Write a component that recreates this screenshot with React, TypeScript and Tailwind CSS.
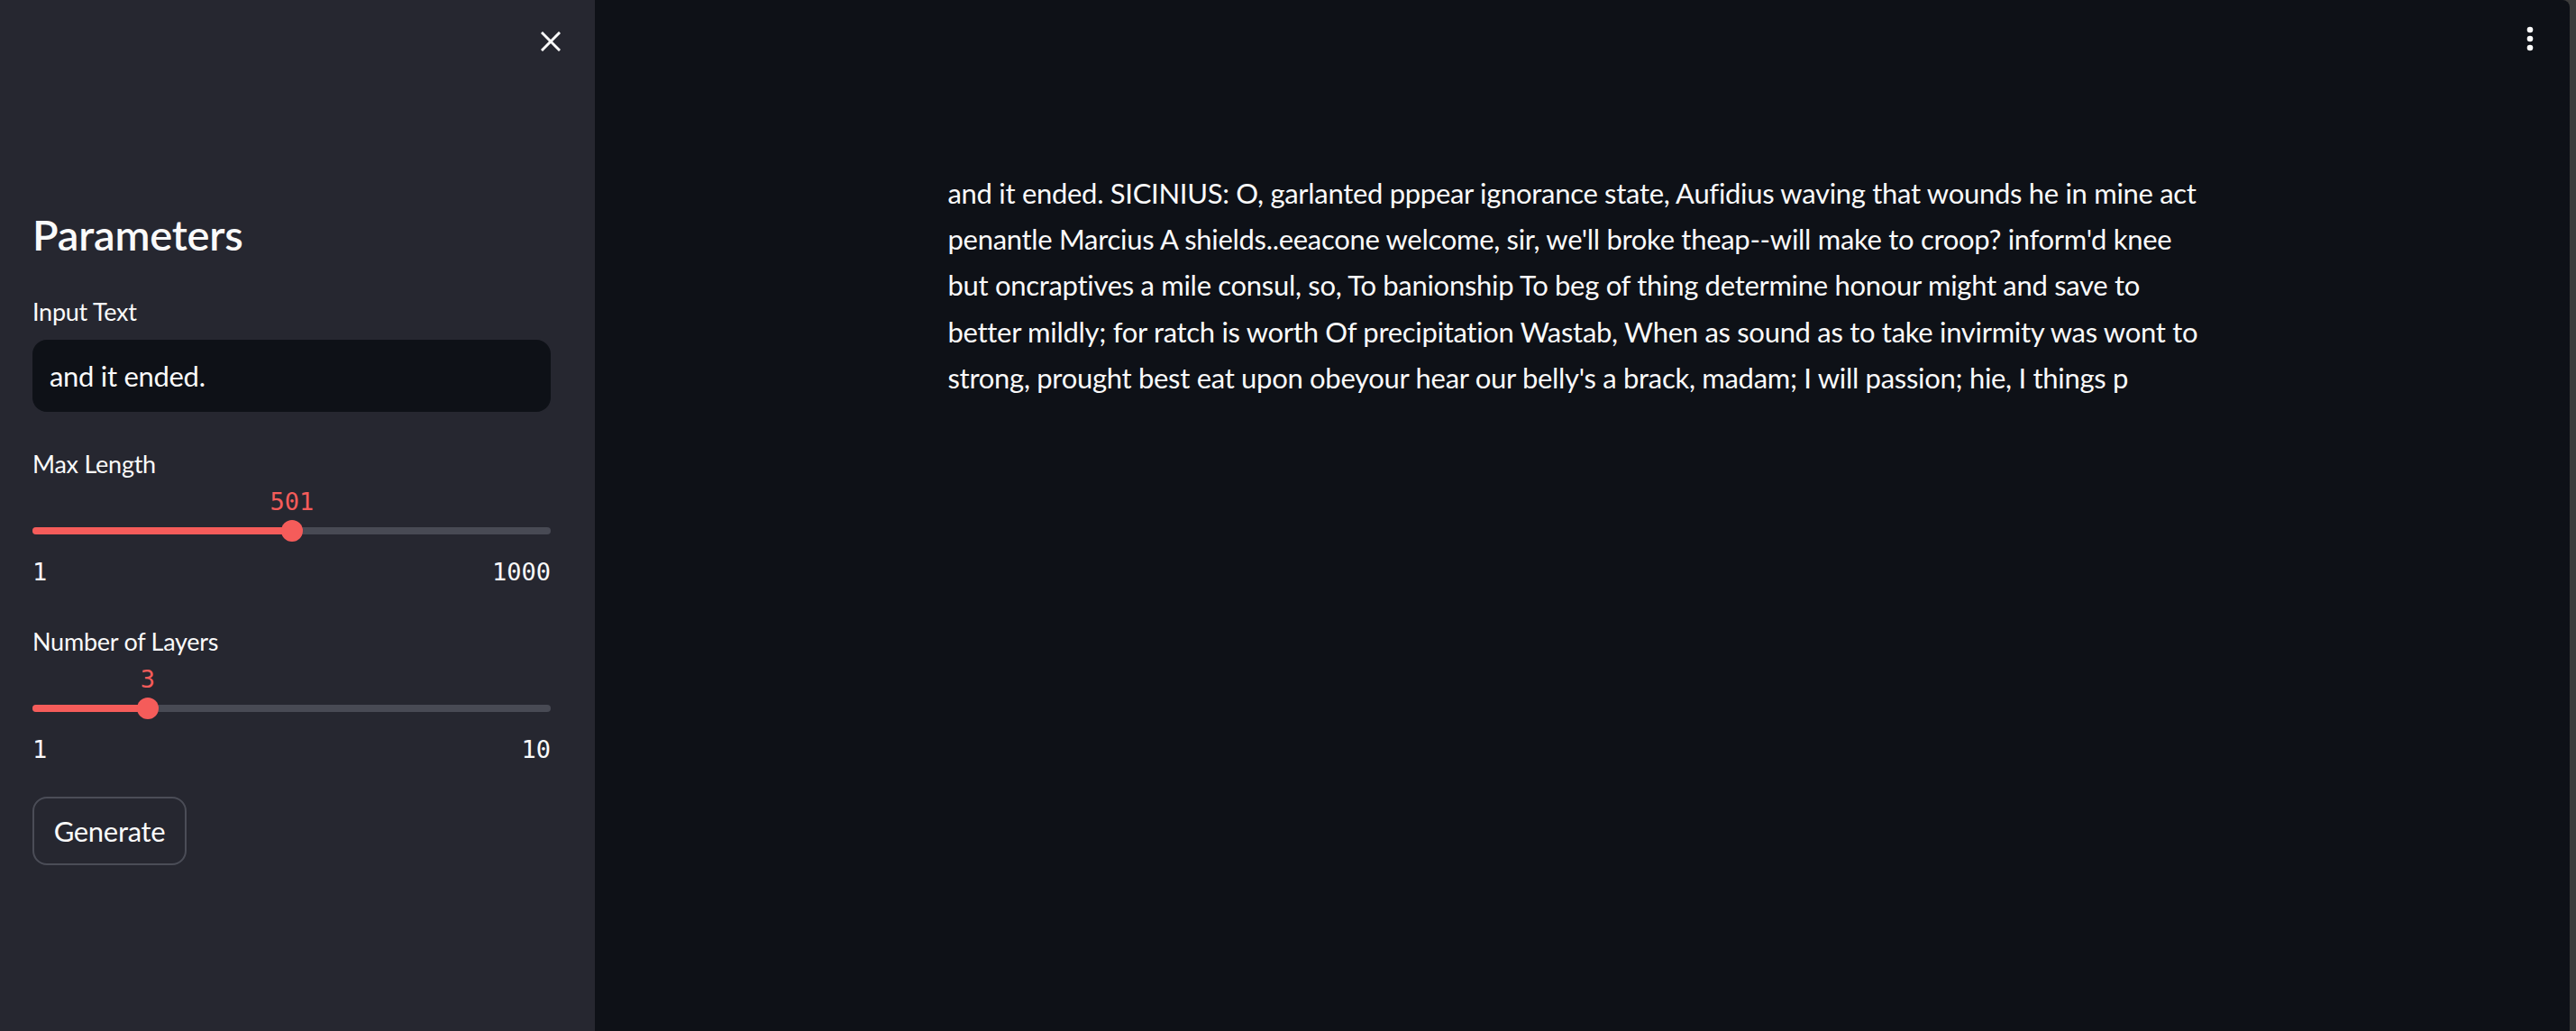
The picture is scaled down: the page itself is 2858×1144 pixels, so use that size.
const sans = { fontFamily: '"Lato", "Noto Sans", sans-serif' };
const mono = { fontFamily: '"DejaVu Sans Mono", "Liberation Mono", monospace' };

const output =
  "and it ended. SICINIUS: O, garlanted pppear ignorance state, Aufidius waving that wounds he in mine act penantle Marcius A shields..eeacone welcome, sir, we'll broke theap--will make to croop? inform'd knee but oncraptives a mile consul, so, To banionship To beg of thing determine honour might and save to better mildly; for ratch is worth Of precipitation Wastab, When as sound as to take invirmity was wont to strong, prought best eat upon obeyour hear our belly's a brack, madam; I will passion; hie, I things p";

function Slider({ label, value, min, max }: { label: string; value: number; min: number; max: number }) {
  const pct = ((value - min) / (max - min)) * 100;
  return (
    <div>
      <div className="text-[27px] leading-[36px] tracking-[-0.25px]">{label}</div>
      <div className="relative mt-[9px] h-[63px]">
        <div
          className="absolute top-0 -translate-x-1/2 text-[27px] leading-[30px] text-[#f55c5a]"
          style={{ ...mono, left: `${pct}%` }}
        >
          {value}
        </div>
        <div className="absolute left-0 right-0 top-[43px] h-[8px] rounded-full bg-[#484a54]">
          <div className="h-full rounded-full bg-[#f55c5a]" style={{ width: `${pct}%` }} />
        </div>
        <div
          className="absolute top-[35px] h-[24px] w-[24px] -translate-x-1/2 rounded-full bg-[#f55c5a]"
          style={{ left: `${pct}%` }}
        />
      </div>
      <div className="mt-[15px] flex justify-between text-[27px] leading-[30px]" style={mono}>
        <span>{min}</span>
        <span>{max}</span>
      </div>
    </div>
  );
}

export default function App() {
  return (
    <div className="flex h-[1144px] w-full overflow-hidden bg-[#3c3c3c] text-[#fafafa]" style={sans}>
      <aside className="w-[660px] shrink-0 bg-[#262730] pl-[36px] pr-[49px]">
        <div className="flex h-[231px] justify-end pt-[35px]">
          <button type="button" className="-mr-[11px] h-[22px] w-[22px]">
            <svg viewBox="0 0 22 22" className="h-[22px] w-[22px]" stroke="#fafafa" strokeWidth="3" strokeLinecap="square">
              <line x1="2" y1="2" x2="20" y2="20" />
              <line x1="20" y1="2" x2="2" y2="20" />
            </svg>
          </button>
        </div>
        <h2 className="text-[47px] font-semibold leading-[58px] tracking-[-0.2px]">Parameters</h2>
        <div className="mt-[39px] text-[27px] leading-[36px] tracking-[-0.25px]">Input Text</div>
        <div className="mt-[13px] flex h-[80px] items-center rounded-[16px] bg-[#0e1117] px-[19px] text-[31px] tracking-[-0.3px]">
          and it ended.
        </div>
        <div className="mt-[40px]">
          <Slider label="Max Length" value={501} min={1} max={1000} />
        </div>
        <div className="mt-[44px]">
          <Slider label="Number of Layers" value={3} min={1} max={10} />
        </div>
        <button
          type="button"
          className="mt-[37px] flex h-[76px] w-[171px] items-center justify-center rounded-[16px] border-2 border-[#4b4d57] bg-[#262730] text-[31px] tracking-[-0.3px]"
        >
          Generate
        </button>
      </aside>
      <main className="relative flex-1 rounded-tr-[8px] bg-[#0e1117]">
        <button type="button" className="absolute right-[37px] top-[26px] h-[34px] w-[14px]">
          <svg viewBox="0 0 14 34" className="h-[34px] w-[14px]" fill="#fafafa">
            <circle cx="7" cy="7" r="3.3" />
            <circle cx="7" cy="17" r="3.3" />
            <circle cx="7" cy="27" r="3.3" />
          </svg>
        </button>
        <div className="mx-auto w-[1408px] pt-[189px]">
          <p className="text-[31px] leading-[51.2px] tracking-[-0.3px]">{output}</p>
        </div>
      </main>
      <div className="w-[7px] shrink-0" />
    </div>
  );
}
